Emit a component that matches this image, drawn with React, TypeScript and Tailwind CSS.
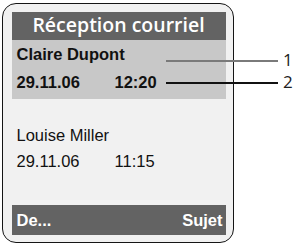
export default function App() {
  return (
    <div className="relative w-[295px] h-[245px] bg-white overflow-hidden font-['Liberation_Sans',Arial,sans-serif]">
      {/* handset screen */}
      <div className="ml-[2px] mt-[3px] w-[232px] h-[240px] flex flex-col rounded-[14px] border-[1.5px] border-[#151515] bg-[#f1f1f1] pl-[8.5px] pr-[7.5px] pt-[7.5px] pb-[7.5px]">
        <div className="h-[28px] bg-[#636363] text-white text-center font-['Open_Sans',sans-serif] font-semibold text-[19.5px] leading-[26px]">
          Réception courriel
        </div>

        <div className="bg-[#c8c8c8] pl-[5px] pb-[3px] text-[16.5px] leading-[28px] font-bold text-[#111]">
          <div>Claire Dupont</div>
          <div className="flex">
            <span className="w-[98px]">29.11.06</span>
            <span>12:20</span>
          </div>
        </div>

        <div className="pl-[5px] mt-[23.5px] text-[16.5px] leading-[26px] text-[#111]">
          <div>Louise Miller</div>
          <div className="flex">
            <span className="w-[98px]">29.11.06</span>
            <span>11:15</span>
          </div>
        </div>

        <div className="flex-1" />

        <div className="h-[30px] bg-[#636363] flex justify-between pl-[5px] pr-[3px] text-white font-bold text-[16.5px] leading-[30px]">
          <span>De...</span>
          <span>Sujet</span>
        </div>
      </div>

      {/* callouts */}
      <div className="absolute left-[166px] top-[60px] w-[112px] h-[1.5px] bg-[#7a7a7a]" />
      <div className="absolute left-[166px] top-[82px] w-[112px] h-[1.5px] bg-[#111]" />
      <span className="absolute left-[283px] top-[49px] font-['Open_Sans',sans-serif] text-[17px] leading-[22px] text-[#222]">1</span>
      <span className="absolute left-[283px] top-[71px] font-['Open_Sans',sans-serif] text-[17px] leading-[22px] text-[#222]">2</span>
    </div>
  );
}
